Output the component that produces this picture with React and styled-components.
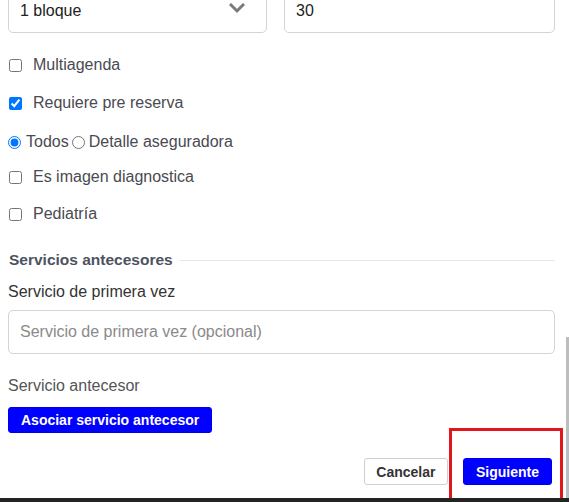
import React from 'react';
import styled, { createGlobalStyle } from 'styled-components';

const GlobalStyle = createGlobalStyle`
  html, body {
    margin: 0;
    padding: 0;
    background: #fff;
    overflow: hidden;
  }
  body {
    font-family: "Liberation Sans", Arial, sans-serif;
    color: #333;
  }
`;

const Page = styled.div`
  position: relative;
  width: 569px;
  height: 502px;
  overflow: hidden;
`;

const Form = styled.div`
  display: flex;
  flex-direction: column;
  padding: 0 14px 0 8px;
  margin-top: -11px;
`;

const FieldRow = styled.div`
  display: grid;
  grid-template-columns: 259px 1fr;
  gap: 17px;
`;

const Box = styled.div`
  box-sizing: border-box;
  height: 44px;
  border: 1px solid #d4d4d4;
  border-radius: 5px;
  display: flex;
  align-items: center;
  justify-content: space-between;
  padding: 0 21px 0 11px;
  font-size: 16px;
  color: ${p => (p.$placeholder ? '#8a8a8a' : '#222')};
`;

const CheckRow = styled.label`
  display: flex;
  align-items: center;
  height: 22px;
  margin-top: ${p => p.$top}px;
  padding-left: ${p => (p.$radio ? 0 : 1)}px;
  font-family: "Liberation Sans", Arial, sans-serif;
  font-size: 16px;
  color: #4a4a52;

  input {
    margin: 0;
    width: 13px;
    height: 13px;
  }
`;

const CheckText = styled.span`
  margin-left: ${p => p.$gap}px;
`;

const SectionHead = styled.div`
  display: flex;
  align-items: center;
  gap: 7px;
  height: 20px;
  margin-top: 25px;
  padding-left: 1px;
  font-size: 15.5px;
  font-weight: bold;
  color: #4d5260;

  &::after {
    content: '';
    flex: 1;
    height: 1px;
    background: #e6e6e6;
  }
`;

const FieldLabel = styled.div`
  font-size: 16px;
  line-height: 18px;
  color: ${p => (p.$muted ? '#555' : '#333')};
  margin-top: ${p => p.$top}px;
`;

const TextBox = styled(Box)`
  margin-top: 9px;
  padding-left: 11px;
`;

const Button = styled.button`
  box-sizing: border-box;
  height: ${p => p.$h || 27}px;
  padding: 0 ${p => p.$px || 12}px;
  border-radius: 3px;
  font-family: "Liberation Sans", Arial, sans-serif;
  font-size: 14px;
  font-weight: bold;
  cursor: pointer;
  border: 1px solid ${p => (p.$primary ? '#0000ee' : '#cfcfcf')};
  background: ${p => (p.$primary ? '#0000ff' : '#fff')};
  color: ${p => (p.$primary ? '#fff' : '#333')};
`;

const AssocWrap = styled.div`
  margin-top: 12px;
`;

const Footer = styled.div`
  display: flex;
  justify-content: flex-end;
  gap: 15px;
  margin-top: 25px;
  padding-right: 3px;
`;

const BottomBar = styled.div`
  position: absolute;
  left: 0;
  right: 0;
  bottom: 0;
  height: 4px;
  background: #232323;
`;

const ScrollThumb = styled.div`
  position: absolute;
  right: 0;
  top: 337px;
  width: 3px;
  height: 161px;
  background: #bdbdbd;
`;

const Highlight = styled.div`
  position: absolute;
  left: 449px;
  top: 428px;
  width: 114px;
  height: 74px;
  box-sizing: border-box;
  border: 3px solid #e3161b;
`;

const Chevron = () => (
  <svg width="16" height="11" viewBox="0 0 16 11" style={{ marginTop: -6 }}>
    <polyline points="2,2 8,8 14,2" fill="none" stroke="#7a7a7a" strokeWidth="3" strokeLinecap="square" />
  </svg>
);

const checks = [
  { label: 'Multiagenda', top: 21 },
  { label: 'Requiere pre reserva', top: 16, checked: true },
];

export default function App() {
  return (
    <Page>
      <GlobalStyle />
      <Form>
        <FieldRow>
          <Box>
            1 bloque
            <Chevron />
          </Box>
          <Box>30</Box>
        </FieldRow>

        {checks.map(c => (
          <CheckRow key={c.label} $top={c.top}>
            <input type="checkbox" defaultChecked={c.checked} />
            <CheckText $gap={11}>{c.label}</CheckText>
          </CheckRow>
        ))}

        <CheckRow $top={17} $radio>
          <input type="radio" name="tipo" defaultChecked />
          <CheckText $gap={5}>Todos</CheckText>
          <input type="radio" name="tipo" style={{ marginLeft: 3 }} />
          <CheckText $gap={4}>Detalle aseguradora</CheckText>
        </CheckRow>

        <CheckRow $top={13}>
          <input type="checkbox" />
          <CheckText $gap={11}>Es imagen diagnostica</CheckText>
        </CheckRow>
        <CheckRow $top={15}>
          <input type="checkbox" />
          <CheckText $gap={11}>Pediatría</CheckText>
        </CheckRow>

        <SectionHead>Servicios antecesores</SectionHead>

        <FieldLabel $top={13}>Servicio de primera vez</FieldLabel>
        <TextBox $placeholder>Servicio de primera vez (opcional)</TextBox>

        <FieldLabel $top={23} $muted>Servicio antecesor</FieldLabel>
        <AssocWrap>
          <Button $primary $h={26} $px={12}>Asociar servicio antecesor</Button>
        </AssocWrap>

        <Footer>
          <Button $px={11.5}>Cancelar</Button>
          <Button $primary $px={12}>Siguiente</Button>
        </Footer>
      </Form>
      <ScrollThumb />
      <Highlight />
      <BottomBar />
    </Page>
  );
}
